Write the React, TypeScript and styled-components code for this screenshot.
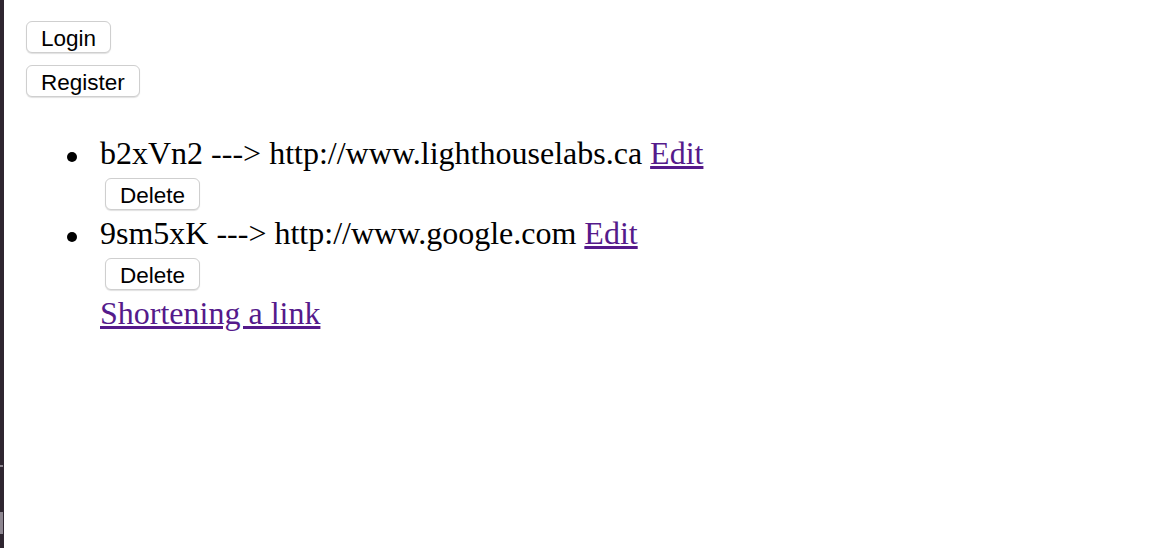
import React from "react";
import styled, { createGlobalStyle } from "styled-components";

const GlobalStyle = createGlobalStyle`
  html, body { margin: 0; padding: 0; background: #ffffff; }
  body { font-family: "Liberation Serif", "Times New Roman", serif; color: #000; }
`;

const Frame = styled.div`
  display: flex;
  min-height: 548px;
`;

const EdgeStrip = styled.div`
  position: relative;
  width: 4px;
  flex: 0 0 4px;
  min-height: 548px;
  background: #2e2530;
`;

const EdgeMark = styled.div<{ $top: number; $h: number }>`
  position: absolute;
  left: 0;
  top: ${(p) => p.$top}px;
  width: 3px;
  height: ${(p) => p.$h}px;
  background: #8d8690;
`;

const Main = styled.main`
  flex: 1;
  padding: 21px 0 0 22px;
`;

const AuthStack = styled.div`
  display: flex;
  flex-direction: column;
  align-items: flex-start;
  gap: 12px;
`;

const Button = styled.button`
  height: 32px;
  padding: 4px 14px 0;
  font-family: "Liberation Sans", Arial, sans-serif;
  font-size: 22.5px;
  color: #000;
  background: #ffffff;
  border: 1px solid #cfcfcf;
  border-radius: 6px;
  box-shadow: 0 1px 1px rgba(0, 0, 0, 0.12);
  line-height: 1;
  cursor: pointer;
`;

const DeleteButton = styled(Button)`
  display: block;
  margin: 6px 0 5px 5px;
`;

const UrlList = styled.ul`
  margin: 38px 0 0 0;
  padding: 0 0 0 74px;
  list-style: none;
  font-size: 32px;
  line-height: 37px;
`;

const UrlItem = styled.li`
  position: relative;
  &::before {
    content: "";
    position: absolute;
    left: -33px;
    top: 17px;
    width: 10px;
    height: 10px;
    border-radius: 50%;
    background: #000;
  }
`;

const Link = styled.a`
  color: #551a8b;
  text-decoration: underline;
`;

const Footer = styled.div`
  padding-left: 74px;
  font-size: 32px;
  line-height: 37px;
`;

const urls = [
  { id: "b2xVn2", long: "http://www.lighthouselabs.ca" },
  { id: "9sm5xK", long: "http://www.google.com" },
];

export default function App() {
  return (
    <>
      <GlobalStyle />
      <Frame>
        <EdgeStrip>
          <EdgeMark $top={465} $h={2} />
          <EdgeMark $top={512} $h={22} />
        </EdgeStrip>
        <Main>
          <AuthStack>
            <Button>Login</Button>
            <Button>Register</Button>
          </AuthStack>
          <UrlList>
            {urls.map((u) => (
              <UrlItem key={u.id}>
                {u.id} ---&gt; {u.long} <Link href="#">Edit</Link>
                <DeleteButton>Delete</DeleteButton>
              </UrlItem>
            ))}
          </UrlList>
          <Footer>
            <Link href="#">Shortening a link</Link>
          </Footer>
        </Main>
      </Frame>
    </>
  );
}
